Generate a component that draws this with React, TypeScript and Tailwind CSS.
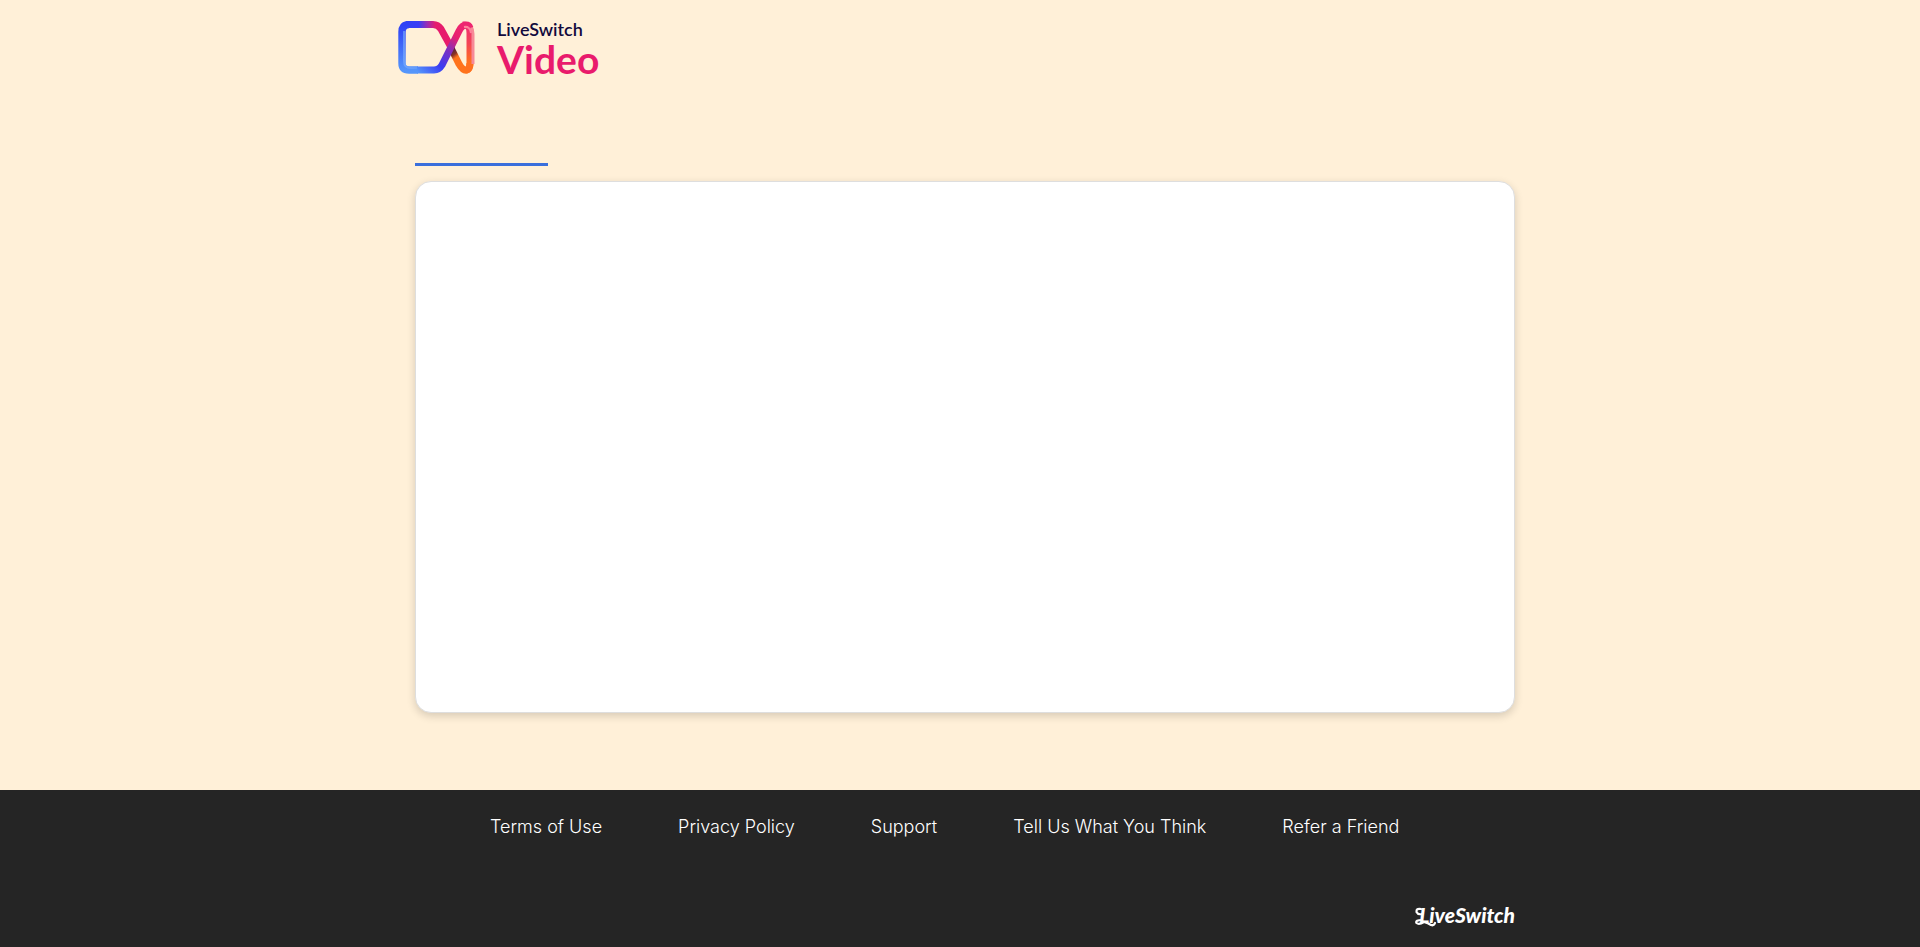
const footerLinks = [
  "Terms of Use",
  "Privacy Policy",
  "Support",
  "Tell Us What You Think",
  "Refer a Friend",
];

function VideoMark() {
  return (
    <svg width="77" height="53" viewBox="0 0 77 53" fill="none" aria-hidden="true">
      <defs>
        <linearGradient id="top" gradientUnits="userSpaceOnUse" x1="4" y1="10" x2="60" y2="10">
          <stop offset="0" stopColor="#2f41f5" />
          <stop offset="0.3" stopColor="#3a3cf5" />
          <stop offset="0.45" stopColor="#9a2bb4" />
          <stop offset="0.6" stopColor="#e51c6d" />
          <stop offset="1" stopColor="#ea1c6c" />
        </linearGradient>
        <linearGradient id="left" gradientUnits="userSpaceOnUse" x1="0" y1="4" x2="0" y2="50">
          <stop offset="0" stopColor="#2f41f5" />
          <stop offset="1" stopColor="#5596fb" />
        </linearGradient>
        <linearGradient id="rise" gradientUnits="userSpaceOnUse" x1="19" y1="50" x2="64" y2="4">
          <stop offset="0" stopColor="#5596fb" />
          <stop offset="0.3" stopColor="#3a3df3" />
          <stop offset="0.56" stopColor="#7a30c4" />
          <stop offset="0.8" stopColor="#e81f70" />
          <stop offset="1" stopColor="#ee2670" />
        </linearGradient>
        <linearGradient id="fall" gradientUnits="userSpaceOnUse" x1="52" y1="30" x2="63" y2="44">
          <stop offset="0" stopColor="#4c2040" />
          <stop offset="0.3" stopColor="#8b3524" />
          <stop offset="0.5" stopColor="#ff731c" />
          <stop offset="1" stopColor="#ff731c" />
        </linearGradient>
        <linearGradient id="right" gradientUnits="userSpaceOnUse" x1="0" y1="4" x2="0" y2="50">
          <stop offset="0" stopColor="#ee2f72" />
          <stop offset="0.4" stopColor="#f44455" />
          <stop offset="0.8" stopColor="#ff7020" />
        </linearGradient>
        <linearGradient id="shine" gradientUnits="userSpaceOnUse" x1="8" y1="0" x2="32" y2="0">
          <stop offset="0" stopColor="#7eb0ff" />
          <stop offset="1" stopColor="#7eb0ff" stopOpacity="0" />
        </linearGradient>
      </defs>
      <path d="M9 3.5H35Q40 3.5 43 8L54 28" stroke="url(#top)" strokeWidth="7" />
      <path d="M53 27L61 43Q65 50 69 49Q72 48 72 42" stroke="url(#fall)" strokeWidth="7" />
      <path d="M65 4Q72 3 72 12V42Q72 47 69 49" stroke="url(#right)" strokeWidth="7" />
      <path d="M68 3Q75 4 75 13V43" stroke="#f78997" strokeWidth="3" />
      <path d="M11 3.5Q4 3.5 4 11V42Q4 49 11 49H20" stroke="url(#left)" strokeWidth="7.4" />
      <path d="M6 10V40Q6 47 13 47H32" stroke="url(#shine)" strokeWidth="2" opacity="0.6" />
      <path d="M19 49H36Q41 49 44 44L61 10Q64 4 68 4Q71 4 72 7" stroke="url(#rise)" strokeWidth="7" />
      <path d="M66 6Q72 5 73 12" stroke="#ff829b" strokeWidth="2" />
    </svg>
  );
}

export default function App() {
  return (
    <div className="flex min-h-screen flex-col bg-[#fff0d8] font-['Inter',sans-serif]">
      <header className="mx-auto w-full max-w-[1124px] pt-5">
        <a href="#" className="flex w-fit items-start gap-[22px]" aria-label="LiveSwitch Video">
          <span className="pt-px">
            <VideoMark />
          </span>
          <span className="flex flex-col font-['Lato',sans-serif]">
            <span className="text-[18px] leading-[18px] font-semibold text-[#120a3d]">LiveSwitch</span>
            <span className="text-[39px] leading-[42px] font-bold text-[#e91b6c]">Video</span>
          </span>
        </a>
      </header>

      <main className="mx-auto flex w-full max-w-[1124px] grow flex-col pt-[83px] pr-[7px] pb-[77px] pl-[17px]">
        <div className="h-[3px] w-[133px] bg-[#3a6fdc]" />
        <section className="mt-[15px] min-h-[531px] grow rounded-2xl border border-[#dedede] bg-white shadow-[0_3px_8px_rgba(0,0,0,0.16)]" />
      </main>

      <footer className="bg-[#252525] text-white">
        <div className="mx-auto w-full max-w-[1124px] pt-6 pr-[7px] pb-4 pl-[92px]">
          <nav className="flex flex-wrap gap-x-[76px] text-[18px] leading-[26px] font-light">
            {footerLinks.map((label) => (
              <a key={label} href="#">
                {label}
              </a>
            ))}
          </nav>
          <div className="mt-[63px] flex justify-end">
            <a
              href="#"
              className="relative pb-1 font-['Lato',sans-serif] text-[21px] leading-6 font-black italic"
            >
              LiveSwitch
              <svg
                className="absolute top-0 -left-1"
                width="56"
                height="28"
                viewBox="0 0 56 28"
                fill="none"
                stroke="currentColor"
                strokeWidth="2.2"
                strokeLinecap="round"
                aria-hidden="true"
              >
                <path d="M7 17Q0 17 1.500 20Q4 22 9 19Q13 20 16 22Q19 23 20 20" />
                <path d="M6 6Q1 5 1.500 9Q3 12 7 11" />
              </svg>
            </a>
          </div>
        </div>
      </footer>
    </div>
  );
}
